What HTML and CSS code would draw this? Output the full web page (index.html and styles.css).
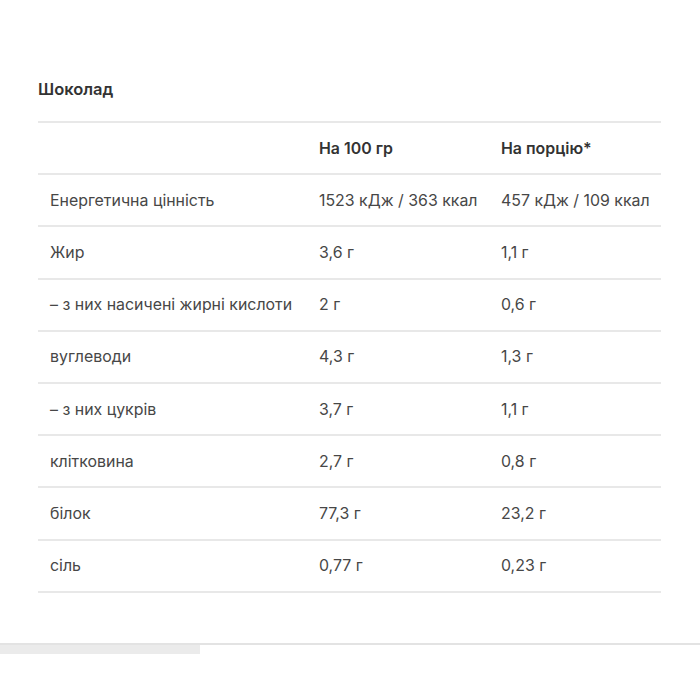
FILE: index.html
```html
<!DOCTYPE html>
<html>
<head>
<meta charset="utf-8">
<link rel="stylesheet" href="styles.css">
</head>
<body>
<div class="page">
  <section class="nutrition">
    <h2 class="title">Шоколад</h2>
    <table class="table">
      <thead>
        <tr><th></th><th>На 100 гр</th><th>На порцію*</th></tr>
      </thead>
      <tbody>
        <tr><td>Енергетична цінність</td><td>1523 кДж / 363 ккал</td><td>457 кДж / 109 ккал</td></tr>
        <tr><td>Жир</td><td>3,6 г</td><td>1,1 г</td></tr>
        <tr><td>– з них насичені жирні кислоти</td><td>2 г</td><td>0,6 г</td></tr>
        <tr><td>вуглеводи</td><td>4,3 г</td><td>1,3 г</td></tr>
        <tr><td>– з них цукрів</td><td>3,7 г</td><td>1,1 г</td></tr>
        <tr><td>клітковина</td><td>2,7 г</td><td>0,8 г</td></tr>
        <tr><td>білок</td><td>77,3 г</td><td>23,2 г</td></tr>
        <tr><td>сіль</td><td>0,77 г</td><td>0,23 г</td></tr>
      </tbody>
    </table>
  </section>
  <div class="tabs"><div class="tab-indicator"></div></div>
</div>
</body>
</html>
```
FILE: styles.css
```css
html, body { margin: 0; padding: 0; background: #fff; }
body { font-family: Inter, Roboto, "Noto Sans", sans-serif; color: #3a3a3a; }
.page { padding-top: 77px; }
.nutrition { margin: 0 39px 0 38px; }
.title { margin: 0 0 20px 0; font-size: 16.5px; font-weight: 600; color: #333; line-height: 24px; }
.table { width: 100%; border-collapse: collapse; font-size: 15.9px; }
.table th, .table td { text-align: left; height: 50.2px; padding: 0; border-top: 2px solid #e8e8e8; border-bottom: 2px solid #e8e8e8; color: #474747; }
.table th { font-weight: 600; color: #333; }
.table th:first-child, .table td:first-child { padding-left: 12px; width: 269px; }
.table th:nth-child(2), .table td:nth-child(2) { width: 182px; }
.tabs { margin-top: 50px; border-top: 2px solid #e3e3e3; }
.tab-indicator { width: 200px; height: 9px; background: #ebebeb; }
```
